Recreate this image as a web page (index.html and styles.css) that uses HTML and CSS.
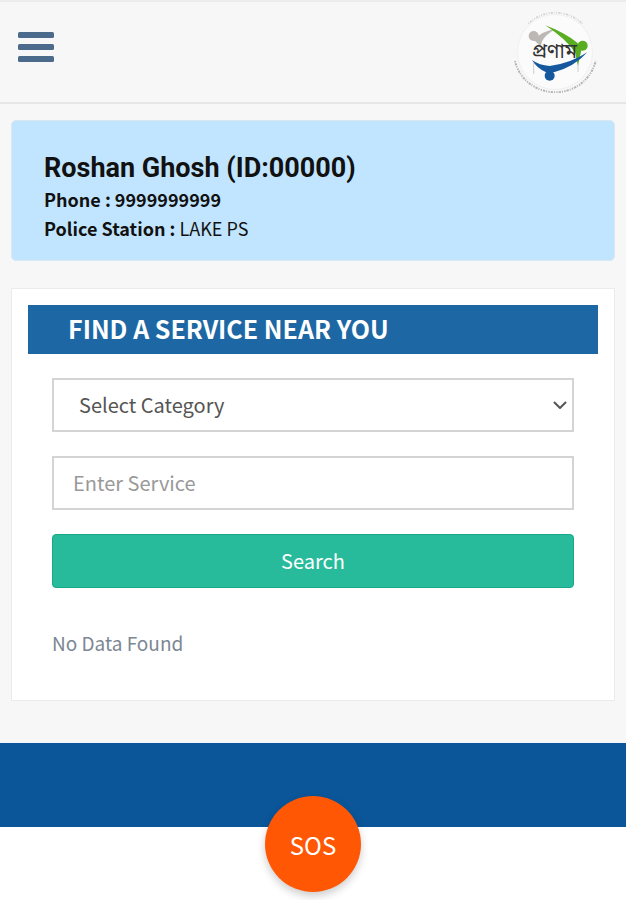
FILE: index.html
```html
<!DOCTYPE html>
<html lang="en">
<head>
<meta charset="utf-8">
<meta name="viewport" content="width=device-width, initial-scale=1">
<title>Pronam</title>
<link rel="stylesheet" href="styles.css">
</head>
<body>
<div class="page">
  <header class="topbar">
    <button class="menu" type="button" aria-label="Menu">
      <svg width="36" height="30" viewBox="0 0 36 30" aria-hidden="true">
        <rect width="36" height="6" rx="1.5"/>
        <rect y="12" width="36" height="6" rx="1.5"/>
        <rect y="24" width="36" height="6" rx="1.5"/>
      </svg>
    </button>
    <svg class="logo" viewBox="40 30 255 246" role="img" aria-label="Pronam">
      <circle cx="166" cy="153" r="112" fill="#fbfbfb" stroke="#ddd" stroke-width="2" stroke-dasharray="3 3"/>
      <path class="ring" d="M86 68A116 116 0 0 1 248 68" stroke="#d0d0d0" stroke-width="5" stroke-dasharray="3 4 6 3 2 5"/>
      <path class="ring" d="M46 180A124 120 0 0 0 288 180" stroke="#b4b4b4" stroke-width="6" stroke-dasharray="4 3 7 3 3 4"/>
      <circle cx="102" cy="105" r="15" fill="#bcb8b4"/>
      <path d="M103 117Q126 90 168 84Q138 100 127 121L122 142Q116 126 103 117Z" fill="#bcb8b4"/>
      <path d="M137 73Q162 82 190 97Q213 110 233 125L246 145Q240 167 235 195Q230 175 227 156Q201 115 137 73Z" fill="#58ad20"/>
      <circle cx="249" cy="134" r="15" fill="#58ad20"/>
      <path d="M97 177Q119 193 150 195Q211 188 263 154Q223 198 165 213H138Q112 202 97 177Z" fill="#15589e"/>
      <path d="M102 184V219M235 188V213" fill="none" stroke="#bbb" stroke-width="2"/>
      <circle cx="150" cy="224" r="15" fill="#15589e"/>
      <text class="logo-text" x="164" y="170" text-anchor="middle">প্রণাম</text>
    </svg>
  </header>

  <main class="content">
    <section class="profile">
      <h1 class="name">Roshan Ghosh (ID:00000)</h1>
      <p class="detail"><strong>Phone : 9999999999</strong></p>
      <p class="detail"><strong>Police Station :</strong> LAKE PS</p>
    </section>

    <section class="panel">
      <h2 class="panel-title">FIND A SERVICE NEAR YOU</h2>
      <form class="search">
        <div class="select-wrap">
          <select class="field category" aria-label="Category">
            <option>Select Category</option>
          </select>
          <svg class="chevron" width="14" height="8" viewBox="0 0 14 8" aria-hidden="true"><path d="M1 1L7 7L13 1"/></svg>
        </div>
        <input class="field" type="text" placeholder="Enter Service" aria-label="Service">
        <button class="submit" type="submit">Search</button>
      </form>
      <p class="result">No Data Found</p>
    </section>
  </main>

  <footer class="footer">
    <div class="footer-bar"></div>
    <button class="sos" type="button">SOS</button>
  </footer>
</div>
</body>
</html>
```

FILE: styles.css
```css
* {
  box-sizing: border-box;
}

body {
  margin: 0;
  background: #fff;
  font-family: "Noto Sans CJK SC", "Noto Sans", sans-serif;
  font-size: 19px;
  color: #111;
}

h1,
h2,
p {
  margin: 0;
}

button,
input,
select {
  font: inherit;
}

.page {
  min-height: 100vh;
  background: #f7f7f7;
}

.topbar {
  display: flex;
  justify-content: space-between;
  align-items: center;
  height: 104px;
  padding: 0 28px 0 18px;
  border-top: 2px solid #ececec;
  border-bottom: 2px solid #e6e6e6;
}

.menu {
  display: flex;
  margin-bottom: 10px;
  padding: 0;
  border: 0;
  background: none;
  fill: #4c6a8c;
}

.logo {
  width: 85px;
  height: 82px;
}

.ring {
  fill: none;
}

.logo-text {
  font-family: "Noto Sans Bengali", "Noto Sans", sans-serif;
  font-size: 60px;
  fill: #333;
}

.content {
  display: flex;
  flex-direction: column;
  gap: 27px;
  padding: 16px 11px 42px 11px;
}

.profile {
  padding: 30px 32px 17px 32px;
  border: 1px solid #d8e8f2;
  border-radius: 5px;
  background: #c2e5ff;
}

.name {
  font-family: Roboto, sans-serif;
  font-size: 27px;
  font-weight: 700;
  line-height: 34px;
}

.detail {
  font-size: 18px;
  line-height: 29px;
}

.panel {
  padding: 16px;
  border: 1px solid #ebebeb;
  background: #fff;
}

.panel-title {
  padding: 0 40px 3px;
  background: #1d68a4;
  color: #fff;
  font-size: 25px;
  font-weight: 600;
  line-height: 46px;
}

.search {
  display: flex;
  flex-direction: column;
  gap: 24px;
  padding: 24px;
}

.select-wrap {
  position: relative;
  display: flex;
}

.field {
  width: 100%;
  height: 54px;
  padding: 0 19px 2px;
  border: 2px solid #d4d4d4;
  border-radius: 0;
  background: #fff;
  color: #555;
  font-size: 20px;
}

.field::placeholder {
  color: #999;
  opacity: 1;
}

.category {
  appearance: none;
  padding: 0 25px 2px;
}

.chevron {
  position: absolute;
  right: 7px;
  top: 23px;
  fill: none;
  stroke: #555;
  stroke-width: 2;
  pointer-events: none;
}

.submit {
  height: 54px;
  padding: 0 0 2px;
  border: 1px solid #18a787;
  border-radius: 4px;
  background: #27bb9b;
  color: #fff;
  font-size: 20px;
}

.result {
  padding: 16px 24px 26px;
  color: #7c8794;
  line-height: 30px;
}

.footer {
  position: relative;
  padding-bottom: 74px;
  background: #fff;
}

.footer-bar {
  height: 84px;
  background: #0a5699;
}

.sos {
  position: absolute;
  left: 50%;
  bottom: 9px;
  width: 96px;
  height: 96px;
  margin-left: -48px;
  border: 0;
  border-radius: 50%;
  background: #ff5703;
  box-shadow: 0 4px 8px rgba(0, 0, 0, 0.2);
  color: #fff;
  font-size: 24px;
}
```
